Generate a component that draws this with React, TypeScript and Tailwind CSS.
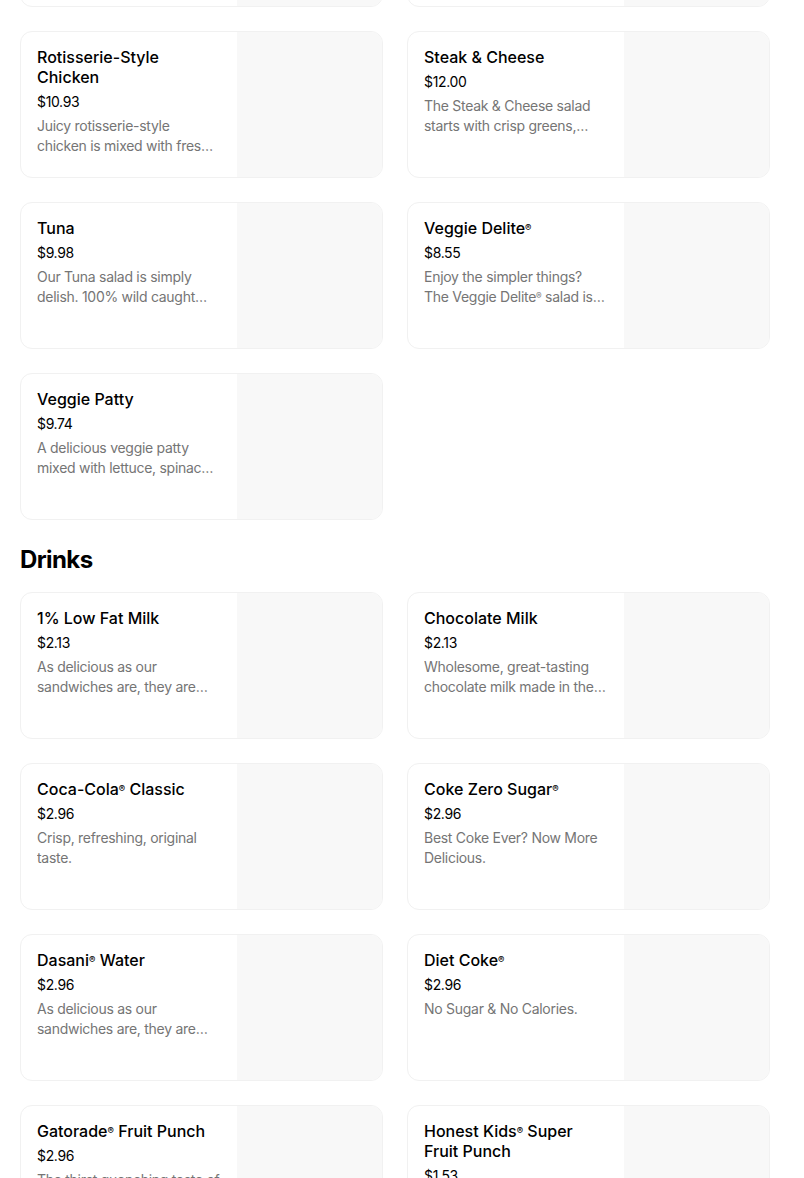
import React from 'react';

type Item = { name: string; price: string; desc: string };

const salads: Item[] = [
  { name: 'Oven Roasted Turkey', price: '$10.24', desc: 'Lean oven roasted turkey breast on a bed of fresh greens.' },
  { name: 'Spicy Italian', price: '$10.24', desc: 'The Spicy Italian salad combines pepperoni and Genoa salami.' },
  { name: 'Rotisserie-Style Chicken', price: '$10.93', desc: 'Juicy rotisserie-style chicken is mixed with fresh greens and veggies.' },
  { name: 'Steak & Cheese', price: '$12.00', desc: 'The Steak & Cheese salad starts with crisp greens, bursting with flavor.' },
  { name: 'Tuna', price: '$9.98', desc: 'Our Tuna salad is simply delish. 100% wild caught tuna blended with mayo.' },
  { name: 'Veggie Delite®', price: '$8.55', desc: 'Enjoy the simpler things? The Veggie Delite® salad is a crisp, fresh choice.' },
  { name: 'Veggie Patty', price: '$9.74', desc: 'A delicious veggie patty mixed with lettuce, spinach, tomatoes and more.' },
];

const drinks: Item[] = [
  { name: '1% Low Fat Milk', price: '$2.13', desc: 'As delicious as our sandwiches are, they are even better with a drink.' },
  { name: 'Chocolate Milk', price: '$2.13', desc: 'Wholesome, great-tasting chocolate milk made in the USA with real milk.' },
  { name: 'Coca-Cola® Classic', price: '$2.96', desc: 'Crisp, refreshing, original taste.' },
  { name: 'Coke Zero Sugar®', price: '$2.96', desc: 'Best Coke Ever? Now More Delicious.' },
  { name: 'Dasani® Water', price: '$2.96', desc: 'As delicious as our sandwiches are, they are even better with a drink.' },
  { name: 'Diet Coke®', price: '$2.96', desc: 'No Sugar & No Calories.' },
  { name: 'Gatorade® Fruit Punch', price: '$2.96', desc: 'The thirst quenching taste of Gatorade Fruit Punch.' },
  { name: 'Honest Kids® Super Fruit Punch', price: '$1.53', desc: 'Organic juice drink with no added sugar.' },
];

// the font in the shot draws ® small and high, so shrink it
function Reg({ text }: { text: string }) {
  const parts = text.split('®');
  return (
    <>
      {parts.map((p, i) => (
        <React.Fragment key={i}>
          {p}
          {i < parts.length - 1 && <span className="align-[0.3em] text-[0.6em] leading-none">®</span>}
        </React.Fragment>
      ))}
    </>
  );
}

function ItemCard({ item }: { item: Item }) {
  return (
    <div className="flex h-[147px] overflow-hidden rounded-xl border border-[#f1f1f1] bg-white">
      <div className="min-w-0 flex-1 px-4 pt-[15px]">
        <div className="text-base font-medium leading-5 text-black">
          <Reg text={item.name} />
        </div>
        <div className="mt-[5px] text-sm leading-5 tracking-tight text-black">{item.price}</div>
        <div className="mt-1 line-clamp-2 text-sm leading-5 tracking-[-0.02em] text-[#757575]">
          <Reg text={item.desc} />
        </div>
      </div>
      <div className="w-[145px] shrink-0 bg-[#f8f8f8]" />
    </div>
  );
}

export default function App() {
  return (
    <div className="min-h-screen bg-white font-['Inter',sans-serif] text-black">
      <div className="ml-5 mt-[-140px] w-[750px]">
        <section className="grid grid-cols-2 gap-6">
          {salads.map((s) => (
            <ItemCard key={s.name} item={s} />
          ))}
        </section>

        <h2 className="mt-6 text-2xl font-bold leading-8 tracking-tight">Drinks</h2>
        <section className="mt-4 grid grid-cols-2 gap-6 pb-10">
          {drinks.map((d) => (
            <ItemCard key={d.name} item={d} />
          ))}
        </section>
      </div>
    </div>
  );
}
